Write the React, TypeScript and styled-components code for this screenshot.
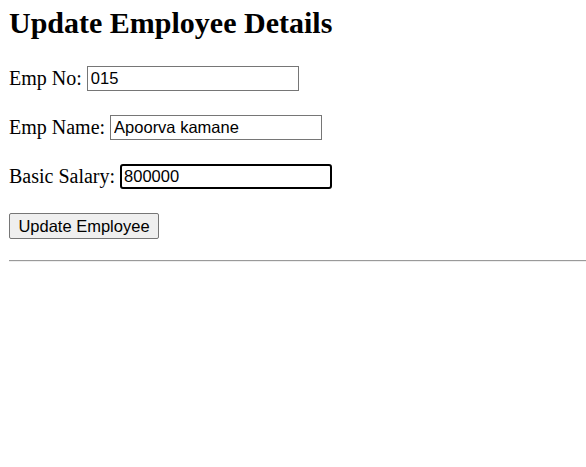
import { useEffect, useRef } from "react"
import styled, { createGlobalStyle } from "styled-components"

const GlobalStyle = createGlobalStyle`
    body {
        margin: 0 0 0 8px;
        background: #ffffff;
        color: #000000;
        font-family: "Liberation Serif", "Times New Roman", serif;
    }
`

const Page = styled.div`
    padding-top: 5px;
`

const Title = styled.h1`
    margin: 0 0 25px 1px;
    font-size: 30px;
    line-height: 36px;
    font-weight: 700;
`

const Form = styled.form`
    display: flex;
    flex-direction: column;
    gap: 24px;
    margin-left: 1px;
`

const Row = styled.div`
    display: flex;
    align-items: center;
    height: 25px;
`

const Label = styled.label`
    font-size: 20px;
    margin-right: 5px;
`

const Input = styled.input<{ $active?: boolean }>`
    box-sizing: border-box;
    width: 212px;
    height: 25px;
    padding: 1px 3px;
    font-family: "Liberation Sans", Arial, sans-serif;
    font-size: 16.5px;
    color: #000000;
    border: ${(p) => (p.$active ? "2px solid #000000" : "1px solid #767676")};
    border-radius: ${(p) => (p.$active ? "3px" : "0")};
    padding-left: ${(p) => (p.$active ? "2px" : "3px")};
    outline: none;
    caret-color: #000000;
`

const Button = styled.button`
    align-self: flex-start;
    box-sizing: border-box;
    width: 150px;
    height: 26px;
    padding: 0;
    font-family: "Liberation Sans", Arial, sans-serif;
    font-size: 16.5px;
    color: #000000;
    background-color: #efefef;
    border: 1px solid #767676;
    border-radius: 2px;
`

const Rule = styled.hr`
    margin: 21px 0 0 1px;
    border: none;
    border-top: 1px solid #9a9a9a;
    border-bottom: 1px solid #eeeeee;
`

const App = () => {
    const salaryRef = useRef<HTMLInputElement>(null)

    useEffect(() => {
        const el = salaryRef.current
        if (el) {
            el.focus()
            el.setSelectionRange(el.value.length, el.value.length)
        }
    }, [])

    return (
        <Page>
            <GlobalStyle />
            <Title>Update Employee Details</Title>
            <Form onSubmit={(e) => e.preventDefault()}>
                <Row>
                    <Label htmlFor="empno">Emp No:</Label>
                    <Input id="empno" defaultValue="015" />
                </Row>
                <Row>
                    <Label htmlFor="empname">Emp Name:</Label>
                    <Input id="empname" defaultValue="Apoorva kamane" />
                </Row>
                <Row>
                    <Label htmlFor="salary">Basic Salary:</Label>
                    <Input id="salary" ref={salaryRef} $active defaultValue="800000" />
                </Row>
                <Button type="submit">Update Employee</Button>
            </Form>
            <Rule />
        </Page>
    )
}

export default App
